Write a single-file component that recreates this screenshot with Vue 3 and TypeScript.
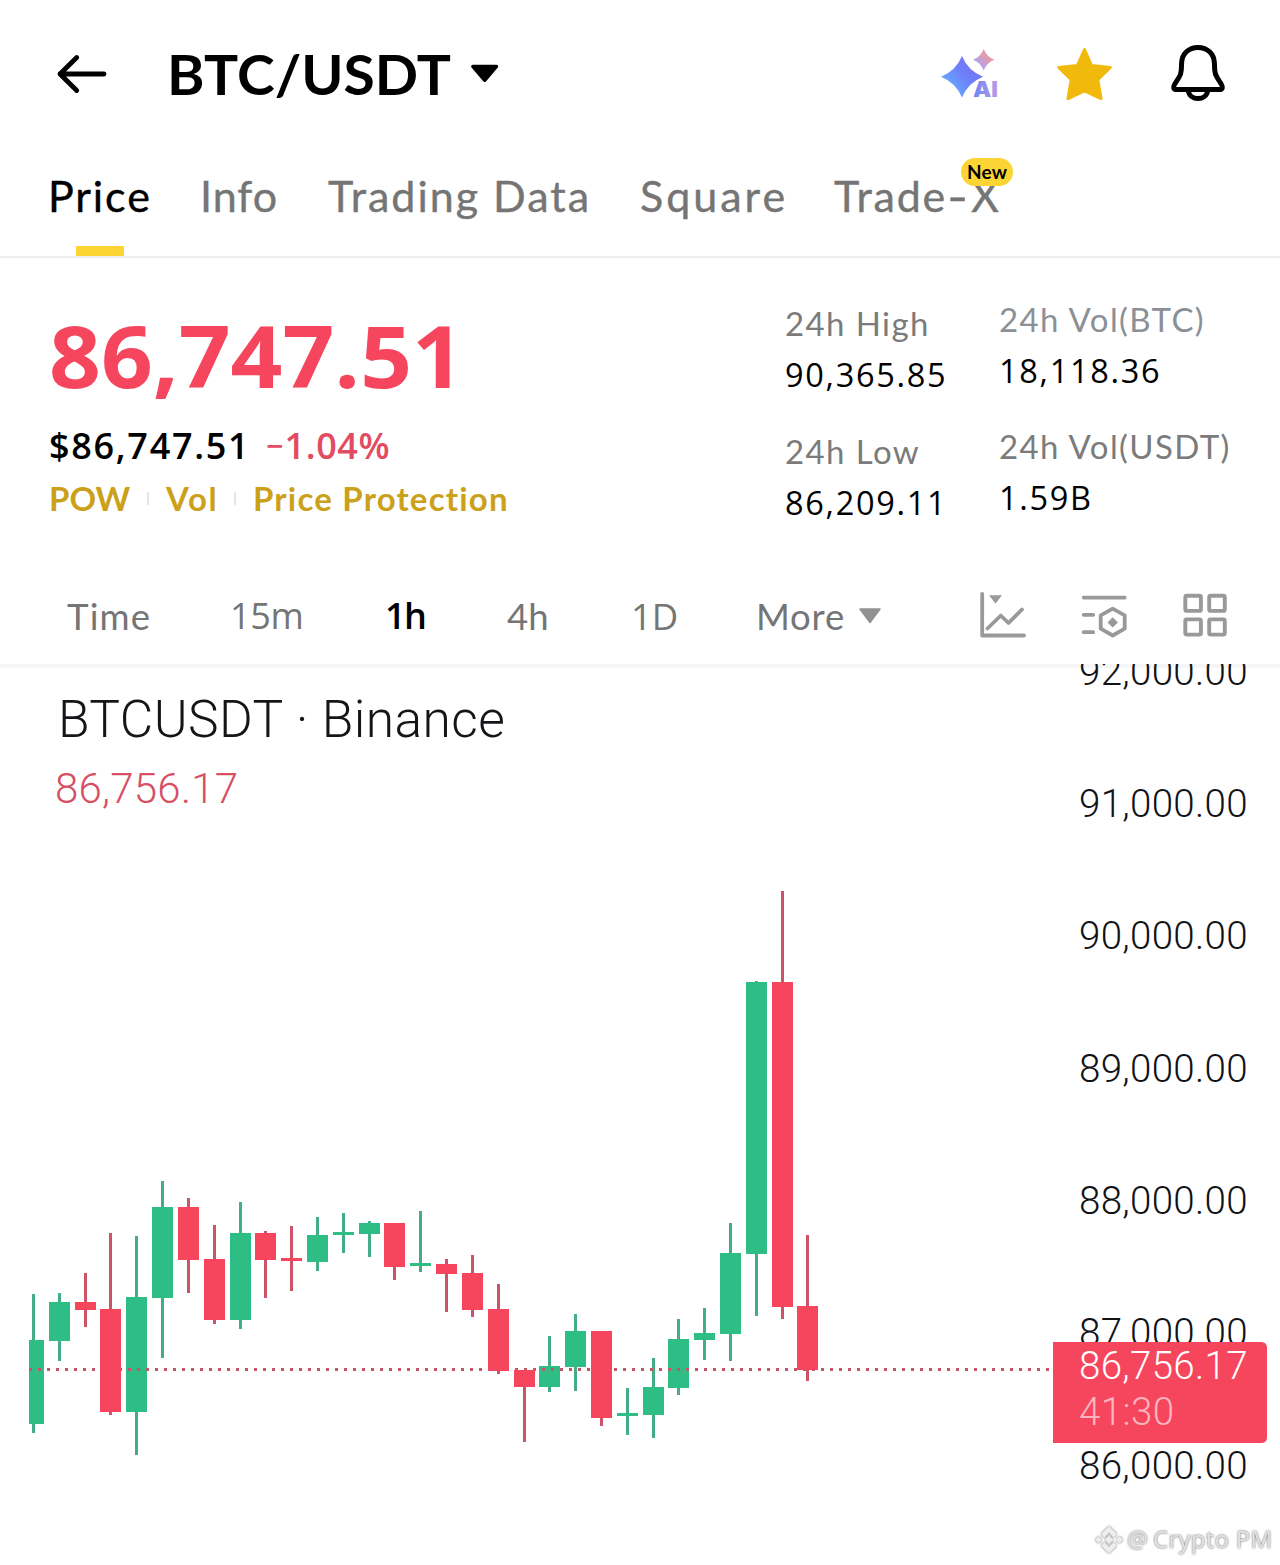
<script setup lang="ts">
interface Candle {
  x: number
  w: number
  open: number
  close: number
  wick: number
  high: number
  low: number
  up: boolean
}

// [body x, body top, body bottom, wick x, wick top, wick bottom, rising, body width]
type Row = [number, number, number, number, number, number, 0 | 1, number?]

const rows: Row[] = [
  [29, 1340, 1424, 32, 1294, 1433, 1, 15],
  [49, 1302, 1341, 58, 1293, 1361, 1],
  [75, 1302, 1310, 84, 1273, 1327, 0],
  [100, 1309, 1412, 109, 1233, 1415, 0],
  [126, 1297, 1412, 135, 1236, 1455, 1],
  [152, 1207, 1298, 161, 1181, 1358, 1],
  [178, 1207, 1260, 187, 1198, 1293, 0],
  [204, 1259, 1320, 213, 1225, 1324, 0],
  [230, 1233, 1320, 239, 1202, 1329, 1],
  [255, 1233, 1260, 264, 1231, 1298, 0],
  [281, 1258, 1261, 290, 1226, 1291, 0],
  [307, 1235, 1262, 316, 1217, 1271, 1],
  [333, 1232, 1235, 342, 1213, 1253, 1],
  [359, 1223, 1234, 368, 1221, 1257, 1],
  [384, 1223, 1267, 393, 1223, 1280, 0],
  [410, 1263, 1266, 419, 1211, 1272, 1],
  [436, 1264, 1274, 445, 1259, 1312, 0],
  [462, 1273, 1310, 471, 1255, 1317, 0],
  [488, 1309, 1371, 497, 1284, 1374, 0],
  [514, 1370, 1387, 523, 1370, 1442, 0],
  [539, 1366, 1387, 548, 1336, 1392, 1],
  [565, 1331, 1367, 574, 1314, 1391, 1],
  [591, 1331, 1418, 600, 1331, 1426, 0],
  [617, 1413, 1416, 626, 1388, 1435, 1],
  [643, 1387, 1415, 652, 1358, 1438, 1],
  [668, 1339, 1388, 677, 1319, 1395, 1],
  [694, 1333, 1340, 703, 1308, 1360, 1],
  [720, 1253, 1334, 729, 1223, 1361, 1],
  [746, 982, 1254, 755, 981, 1316, 1],
  [772, 982, 1307, 781, 891, 1319, 0],
  [797, 1306, 1370, 806, 1235, 1381, 0],
]

const candles: Candle[] = rows.map(([x, open, close, wick, high, low, up, w]) => ({
  x, w: w ?? 21, open, close, wick, high, low, up: up === 1,
}))
const rising = candles.filter((c) => c.up)
const falling = candles.filter((c) => !c.up)

const axis: { label: string; y: number }[] = [
  { label: '92,000.00', y: 684.5 },
  { label: '91,000.00', y: 817 },
  { label: '90,000.00', y: 949 },
  { label: '89,000.00', y: 1082 },
  { label: '88,000.00', y: 1214 },
  { label: '87,000.00', y: 1346 },
  { label: '86,000.00', y: 1479 },
]
</script>

<template>
  <main class="app">
    <header class="header">
      <svg class="back" width="56" height="48" viewBox="54 50 56 48" fill="none" stroke="#000" stroke-width="4.8" stroke-linecap="round" stroke-linejoin="round">
        <path d="M104 74H60M76.7 57.5 60 74l16.7 16.5" />
      </svg>
      <h1 class="pair">BTC/USDT</h1>
      <svg class="caret" width="30" height="20" viewBox="469.5 64 30 20">
        <path d="M472.3 66.5H496L484.2 80.3Z" stroke="#000" stroke-width="3.4" stroke-linejoin="round" />
      </svg>
      <div class="actions">
        <svg width="60" height="60" viewBox="940 44 60 60">
          <defs>
            <linearGradient id="spark" x1="0" y1="1" x2="1" y2="0.2">
              <stop offset="0.1" stop-color="#62b6ff" />
              <stop offset="0.6" stop-color="#6f7ffb" />
              <stop offset="1" stop-color="#7a70f0" />
            </linearGradient>
            <linearGradient id="mini" x1="0" y1="1" x2="1" y2="0">
              <stop offset="0.25" stop-color="#b3a0f5" />
              <stop offset="0.75" stop-color="#ee9a96" />
            </linearGradient>
            <linearGradient id="ai" x1="0" y1="0" x2="1" y2="0">
              <stop offset="0" stop-color="#6c86f4" />
              <stop offset="1" stop-color="#b99be6" />
            </linearGradient>
          </defs>
          <path fill="url(#spark)" d="M962 56Q968 70.7 983 76.7Q968 82.7 962 97.6Q956 82.7 941 76.7Q956 70.7 962 56Z" />
          <path fill="url(#mini)" d="M983.7 49Q986.7 56.7 994.4 59.7Q986.7 62.7 983.7 70.4Q980.7 62.7 973 59.7Q980.7 56.7 983.7 49Z" />
          <text class="ai" x="973" y="97" textLength="25" lengthAdjust="spacingAndGlyphs">AI</text>
        </svg>
        <svg width="60" height="60" viewBox="1054 44 60 60">
          <path fill="#f0b90b" stroke="#f0b90b" stroke-width="3" stroke-linejoin="round" d="M1084.5 49.5 1091.6 65.6 1110.3 67.4 1097.8 79.6 1101 98.6 1084.5 91 1068 98.6 1071.2 79.6 1058.7 67.4 1077.4 65.6Z" />
        </svg>
        <svg width="60" height="60" viewBox="1168 44 60 60" fill="none" stroke="#000" stroke-width="5" stroke-linejoin="round">
          <path d="M1198 47.4C1188.4 47.4 1182 54 1181.6 63L1181.3 70C1181.1 73.6 1180.5 75.5 1178.6 78L1174.8 84C1172.6 87.6 1173.6 89.6 1176.5 89.6H1219.5C1222.4 89.6 1223.4 87.6 1221.2 84L1217.4 78C1215.5 75.5 1214.9 73.6 1214.7 70L1214.4 63C1214 54 1207.6 47.4 1198 47.4Z" />
          <path d="M1188.3 90.5C1189.6 101.3 1206.4 101.3 1207.7 90.5" />
        </svg>
      </div>
    </header>

    <nav class="tabs">
      <a class="tab active price-tab">Price</a>
      <a class="tab info-tab">Info</a>
      <a class="tab data-tab">Trading Data</a>
      <a class="tab square-tab">Square</a>
      <a class="tab tradex-tab">Trade<span class="dash">-</span>X<span class="badge">New</span></a>
    </nav>

    <section class="summary">
      <div class="quote">
        <div class="last">86,747.51</div>
        <div class="sub"><span class="fiat">$86,747.51</span><span class="change"><span class="minus">−</span>1.04%</span></div>
        <div class="tags">
          <span class="pow">POW</span><i></i><span class="vol">Vol</span><i></i><span class="protect">Price Protection</span>
        </div>
      </div>
      <dl class="stats left">
        <dt>24h High</dt>
        <dd>90,365.85</dd>
        <dt>24h Low</dt>
        <dd>86,209.11</dd>
      </dl>
      <dl class="stats right">
        <dt class="cool">24h Vol(BTC)</dt>
        <dd>18,118.36</dd>
        <dt>24h Vol(USDT)</dt>
        <dd>1.59B</dd>
      </dl>
    </section>

    <nav class="intervals">
      <span class="iv time">Time</span>
      <span class="iv num m15">15m</span>
      <span class="iv num h1">1h</span>
      <span class="iv h4">4h</span>
      <span class="iv num d1">1D</span>
      <span class="iv more">More</span>
      <svg class="drop" width="22" height="16" viewBox="0 0 22 16"><path fill="#919191" stroke="#919191" stroke-width="1.5" stroke-linejoin="round" d="M1 1H21L11 14.5Z" /></svg>
      <div class="tools">
        <svg width="52" height="52" viewBox="978 589 52 52" fill="none" stroke="#999" stroke-width="3.8" stroke-linecap="round" stroke-linejoin="round">
          <path d="M982.2 594V635.5H1024M987.5 628.5 1000.8 615.5 1008.5 623 1022 609.5" />
          <path d="M989 595.3H1002L995.5 603.5Z" fill="#999" stroke="none" />
        </svg>
        <svg width="52" height="52" viewBox="1078.8 589 52 52" fill="none" stroke="#999" stroke-width="3.8" stroke-linecap="round" stroke-linejoin="round">
          <path d="M1083.5 597.6H1124.5M1083.5 614.8H1093M1083.5 632.2H1093" />
          <path d="M1112.5 608.7 1124.5 615.3V628.7L1112.5 635.5 1100.5 628.7V615.3Z" />
          <path d="M1112.5 617.2 1117.7 622.4 1112.5 627.6 1107.3 622.4Z" fill="#999" stroke="none" />
        </svg>
        <svg width="52" height="52" viewBox="1179 589 52 52" fill="none" stroke="#999" stroke-width="3.9">
          <rect x="1185.3" y="595.7" width="15.6" height="15.2" rx="1.5" />
          <rect x="1209.2" y="595.7" width="15.6" height="15.2" rx="1.5" />
          <rect x="1185.3" y="619.4" width="15.6" height="15.2" rx="1.5" />
          <rect x="1209.2" y="619.4" width="15.6" height="15.2" rx="1.5" />
        </svg>
      </div>
    </nav>

    <svg class="chart" width="1280" height="901" viewBox="0 664 1280 901">
      <rect x="0" y="664" width="1280" height="4" fill="#f6f6f6" />
      <text class="symbol" x="58" y="737" textLength="447">BTCUSDT · Binance</text>
      <text class="current" x="55" y="803" textLength="183">86,756.17</text>

      <g v-for="c in rising" :key="c.x">
        <rect class="wick-up" :x="c.wick" :y="c.high" width="3" :height="c.low - c.high" />
        <rect class="up" :x="c.x" :y="c.open" :width="c.w" :height="c.close - c.open" />
      </g>
      <line class="level" x1="29" y1="1369.5" x2="1050" y2="1369.5" />
      <g v-for="c in falling" :key="c.x">
        <rect class="wick-down" :x="c.wick" :y="c.high" width="3" :height="c.low - c.high" />
        <rect class="down" :x="c.x" :y="c.open" :width="c.w" :height="c.close - c.open" />
      </g>

      <text v-for="a in axis" :key="a.label" class="axis" x="1079" :y="a.y" textLength="168.5">{{ a.label }}</text>
      <path class="down" d="M1053 1342H1261Q1267 1342 1267 1348V1437Q1267 1443 1261 1443H1053Z" />
      <text class="axis tag-price" x="1079" y="1379" textLength="168.5">86,756.17</text>
      <text class="axis tag-time" x="1079" y="1425" textLength="95">41:30</text>

      <g class="mark">
        <path d="M1109 1526 1117 1534 1113.6 1537.4 1109 1532.8 1104.4 1537.4 1101 1534ZM1109 1553.6 1117 1545.6 1113.6 1542.2 1109 1546.8 1104.4 1542.2 1101 1545.6ZM1095 1539.8 1098.5 1536.3 1102 1539.8 1098.5 1543.3ZM1116 1539.8 1119.5 1536.3 1123 1539.8 1119.5 1543.3ZM1109 1535.5 1113.3 1539.8 1109 1544.1 1104.7 1539.8Z" />
        <text x="1127" y="1548" textLength="21" lengthAdjust="spacingAndGlyphs">@</text>
        <text x="1153" y="1548" textLength="119">Crypto PM</text>
      </g>
    </svg>
  </main>
</template>

<style>
body {
  background: #fff;
}
</style>

<style scoped>
.app {
  width: 1280px;
  height: 1565px;
  overflow: hidden;
  background: #fff;
  color: #000;
  font-family: Lato, "Open Sans", sans-serif;
  font-kerning: normal;
}
svg {
  display: block;
  flex: none;
}
.header {
  display: flex;
  align-items: center;
  height: 148px;
  padding: 0 52px 0 54px;
  box-sizing: border-box;
}
.pair {
  width: 299px;
  margin: 0 0 0 57px;
  font-size: 54.5px;
  line-height: 60px;
  font-weight: 700;
  white-space: nowrap;
  transform: scaleX(1.046);
  transform-origin: 0 50%;
}
.caret {
  margin-left: 3.5px;
}
.actions {
  display: flex;
  gap: 54px;
  margin-left: auto;
}
.ai {
  font: 900 21px Inter, sans-serif;
  fill: url(#ai);
  stroke: #fff;
  stroke-width: 2px;
  paint-order: stroke;
}
.tabs {
  display: flex;
  height: 110px;
  padding: 17px 0 0 48px;
  box-sizing: border-box;
  border-bottom: 2px solid #ededed;
}
.tab {
  position: relative;
  font-size: 43px;
  line-height: 62px;
  color: #757575;
  -webkit-text-stroke: 0.4px currentColor;
  white-space: nowrap;
}
.price-tab { width: 152px; letter-spacing: 1.9px; }
.info-tab { width: 128px; letter-spacing: 1px; }
.data-tab { width: 312px; letter-spacing: 2px; }
.square-tab { width: 194px; letter-spacing: 3px; }
.tradex-tab { letter-spacing: 1.8px; }
.dash {
  display: inline-block;
  transform: scaleX(1.3);
  margin: 0 3px;
}
.active {
  color: #000;
}
.active::after {
  content: "";
  position: absolute;
  left: 28px;
  bottom: 0;
  width: 48px;
  height: 10px;
  background: #fcd535;
}
.badge {
  position: absolute;
  left: 127px;
  top: -7px;
  width: 52px;
  height: 28px;
  border-radius: 14px;
  background: #fcd535;
  color: #000;
  font-size: 19px;
  line-height: 28px;
  font-weight: 700;
  letter-spacing: 0.2px;
  text-align: center;
  -webkit-text-stroke: 0;
}
.summary {
  display: flex;
  height: 310px;
}
.quote {
  width: 736px;
  padding: 47px 0 0 49px;
}
.last {
  font: 700 86px/100px "Open Sans", sans-serif;
  color: #f6465d;
  transform: scaleX(1.055);
  transform-origin: 0 50%;
}
.sub {
  display: flex;
  margin-top: 13px;
  font: 600 36px/56px "Open Sans", sans-serif;
}
.fiat {
  width: 218px;
  letter-spacing: 1.7px;
}
.change {
  color: #e24c62;
  letter-spacing: 0.6px;
}
.minus {
  display: inline-block;
  width: 18.5px;
  margin-left: -1px;
  font-size: 30px;
  line-height: 30px;
  vertical-align: 2px;
}
.tags {
  display: flex;
  align-items: center;
  height: 48px;
  font-size: 33px;
  line-height: 48px;
  font-weight: 700;
  color: #cba11c;
}
.tags i {
  width: 2px;
  height: 13px;
  background: #e6e6e6;
}
.pow { width: 98px; }
.vol { width: 68px; margin-left: 17px; letter-spacing: 1.6px; }
.protect { margin-left: 17px; letter-spacing: 1.2px; }
.stats {
  margin: 0;
  padding-top: 41px;
  box-sizing: border-box;
  width: 214px;
  white-space: nowrap;
}
.stats.right {
  padding-top: 37px;
}
.stats dt {
  font-size: 33px;
  line-height: 49px;
  letter-spacing: 1.4px;
  color: #7b7b7b;
}
.stats dd {
  margin: 0 0 26px;
  padding-top: 1px;
  font: 400 32.5px/52px "Open Sans", sans-serif;
  letter-spacing: 1.7px;
}
.stats.right dd {
  margin-bottom: 25px;
}
.stats .cool {
  color: #8b9096;
}
.intervals {
  display: flex;
  align-items: center;
  height: 96px;
  padding-left: 67px;
  font-size: 36.5px;
  color: #757575;
}
.iv {
  line-height: 50px;
  white-space: nowrap;
}
.num {
  font-family: "Open Sans", sans-serif;
}
.time { width: 163px; letter-spacing: 1.2px; }
.m15 { width: 155px; font-size: 36px; letter-spacing: -0.3px; }
.h1 { width: 122px; color: #000; font-size: 36px; font-weight: 600; letter-spacing: -1.6px; }
.h4 { width: 124px; }
.d1 { width: 125px; }
.more { width: 103px; letter-spacing: 0.8px; }
.tools {
  display: flex;
  gap: 48.5px;
  margin-left: 97px;
  margin-top: -2px;
}
.chart text {
  font-family: Roboto, sans-serif;
  font-weight: 350;
  fill: #131722;
}
.chart .symbol { font-size: 51.5px; fill: #131518; }
.chart .current { font-size: 42px; fill: #d64f63; }
.chart .axis { font-size: 38.5px; fill: #101216; }
.chart .tag-price { fill: #fff; }
.chart .tag-time { fill: #fbb5be; }
.up { fill: #2ebd85; }
.down { fill: #f6465d; }
.wick-up { fill: #45ad85; }
.wick-down { fill: #cc5468; }
.level {
  stroke: #c4566a;
  stroke-width: 3;
  stroke-dasharray: 3 6;
}
.mark {
  fill: #ededed;
  filter: drop-shadow(0.6px 0.6px 0.8px rgba(0, 0, 0, 0.6));
}
.chart .mark text {
  font: 400 24px "Open Sans", sans-serif;
  fill: #e2e2e2;
}
</style>
